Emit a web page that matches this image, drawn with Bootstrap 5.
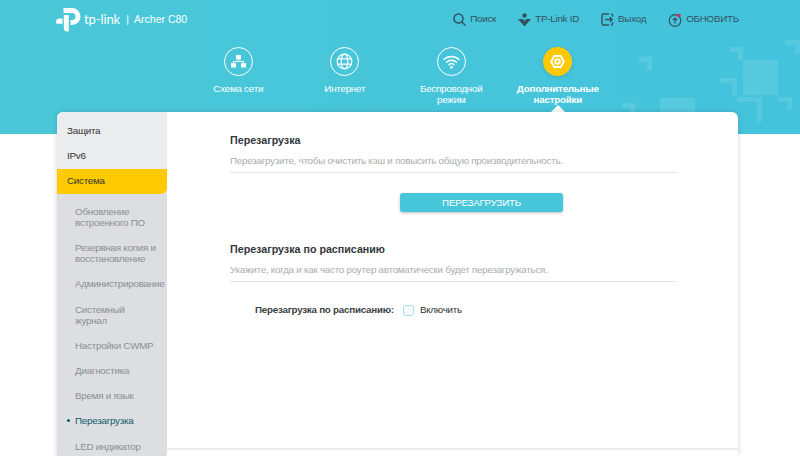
<!DOCTYPE html>
<html lang="ru">
<head>
<meta charset="utf-8">
<title>Archer C80</title>
<link href="https://cdn.jsdelivr.net/npm/bootstrap@5.3.0/dist/css/bootstrap.min.css" rel="stylesheet">
<style>
html,body{height:456px;overflow:hidden;background:#fff;}
body{font-family:"Liberation Sans",Arial,sans-serif;font-size:9.800px;letter-spacing:-.24px;color:#333;}
.hero{height:134px;background:linear-gradient(90deg,#4ac8d8,#43c3dc);position:relative;overflow:hidden;}
.decor{position:absolute;background:rgba(255,255,255,.1);}
.decor-l{position:absolute;border-top:5px solid rgba(255,255,255,.1);border-right:5px solid rgba(255,255,255,.1);}
.d1{left:639px;top:57px;width:13px;height:13px;}
.d2{left:660px;top:98px;width:35px;height:36px;}
.d3{left:622px;top:103px;width:13px;height:31px;}
.d4{left:730px;top:47px;width:13px;height:13px;}
.d5{left:743px;top:60px;width:35px;height:35px;}
.d6{left:720px;top:78px;width:17px;height:17px;}
.d7{left:737px;top:97px;width:25px;height:25px;}
.d8{left:785px;top:40px;width:15px;height:14px;}
.d9{left:778px;top:97px;width:14px;height:13px;}
.topbar{height:39px;padding:0 61px 0 56px;position:relative;}
.brand{color:#fff;gap:3px;}
.brand-word{font-family:Lato,sans-serif;font-size:13px;line-height:1;letter-spacing:-.1px;}
.brand-model{font-size:10.500px;margin-left:3px;letter-spacing:0;}
.toplink{color:#33535f;gap:4px;}
.toplinks{gap:22px;}
.mainnav{width:426px;margin-left:185px;margin-top:8px;position:relative;}
.navitem{width:106.500px;color:#fff;text-align:center;line-height:11px;}
.navcirc{width:29px;height:29px;border:1.500px solid #fff;border-radius:50%;margin:0 auto 7px;}
.navcirc.active{background:#ffc800;border:0;box-shadow:0 1px 4px rgba(0,0,0,.12);}
.navitem.on{font-weight:700;position:relative;}
.navitem.on::after{content:"";position:absolute;left:46px;top:58px;border:7px solid transparent;border-top:0;border-bottom:7px solid #fff;}
.shell{width:681px;margin:-22px 0 0 57px;background:#fff;border-radius:6px 6px 0 0;height:344px;overflow:hidden;box-shadow:0 0 5px rgba(60,70,80,.25);position:relative;}
.side{width:110px;background:#ebecee;flex:none;padding-top:7px;}
.sideitem{height:25px;flex:none;padding-left:10px;color:#333;}
.sideitem.sel{background:#ffcb00;border-radius:0 0 6px 0;}
.subnav{background:#dcdee2;padding-top:12px;flex:1;}
.subitem{padding:0 0 0 18px;color:#8b8f93;line-height:11px;margin-bottom:14.200px;position:relative;white-space:nowrap;}
.subitem.cur{color:#0e5a6b;}
.subitem.cur::before{content:"";position:absolute;left:10px;top:4px;width:3px;height:3px;background:#0e5a6b;border-radius:50%;}
.panel{flex:1;position:relative;padding:22px 61px 0 63px;}
.ttl{font-weight:700;font-size:10.700px;letter-spacing:0;color:#30363b;line-height:13px;}
.dsc{color:#a9adb0;line-height:12px;margin-top:8px;padding-bottom:5px;border-bottom:1px solid #e3e4e6;}
.rebootbtn{display:block;width:163px;height:19px;margin:20px 0 0 170px;padding:0;border:0;border-radius:3px;background:#47c6da;color:#fff;font-size:9.800px;letter-spacing:-.24px;line-height:19px;box-shadow:0 1px 3px rgba(0,0,0,.25);}
.sec2{margin-top:31px;}
.fieldrow{margin-top:21px;padding-left:25px;gap:9px;}
.fieldlbl{font-weight:700;color:#3a3f44;}
.chk{width:11px;height:11px;border:1.500px solid #9fe2ec;border-radius:2.500px;background:#f6fcfd;margin-right:-3px;}
.panelfoot{position:absolute;left:0;right:0;bottom:6px;border-top:2px solid #ebecee;}
</style>
</head>
<body>
<header class="hero">
  <div class="decor-l d1"></div><div class="decor d2"></div><div class="decor-l d3"></div>
  <div class="decor-l d4"></div><div class="decor d5"></div><div class="decor-l d6"></div>
  <div class="decor-l d7"></div><div class="decor-l d8"></div><div class="decor-l d9"></div>
  <div class="topbar d-flex align-items-center justify-content-between">
    <div class="brand d-flex align-items-center">
      <svg width="25" height="25" viewBox="0 0 25 25"><path fill="#fff" d="M7.500 1h8.500a8.500 8.500 0 0 1 0 17h-1.500v-5h1.500a3.500 3.500 0 0 0 0-7H7.500z"/><path fill="#fff" d="M7.800 8h5v16.500h-1.500a3.500 3.500 0 0 1-3.500-3.500zM0 14.800a3.500 3.500 0 0 1 3.500-3.300h3v5.300H.5z"/></svg>
      <span class="brand-word">tp-link</span>
      <span class="brand-model">|&nbsp; Archer C80</span>
    </div>
    <nav class="toplinks d-flex align-items-center">
      <span class="toplink d-flex align-items-center"><svg width="13" height="13" viewBox="0 0 13 13" fill="none" stroke="#33535f" stroke-width="1.500"><circle cx="5.500" cy="5.500" r="4.500"/><path d="M9 9l3.500 3.500"/></svg>Поиск</span>
      <span class="toplink d-flex align-items-center"><svg width="13" height="14" viewBox="0 0 13 14" fill="#33535f"><circle cx="6.500" cy="2.500" r="2.200"/><path d="M0 6h4.500l2 1.800L8.500 6H13l-6.500 7.500z"/></svg>TP-Link ID</span>
      <span class="toplink d-flex align-items-center"><svg width="13" height="13" viewBox="0 0 13 13" fill="none" stroke="#33535f" stroke-width="1.400"><path d="M8 1H2.200A1.300 1.300 0 0 0 1 2.200v8.600A1.300 1.300 0 0 0 2.200 12H8M11.500 3.800v-1.600A1.300 1.300 0 0 0 10 1M11.500 9.200v1.600A1.300 1.300 0 0 1 10 12M4 6.500h7M8.800 4.200l2.400 2.300-2.400 2.300"/></svg>Выход</span>
      <span class="toplink d-flex align-items-center"><svg width="14" height="14" viewBox="0 0 14 14" fill="none" stroke="#33535f" stroke-width="1.200"><circle cx="7" cy="7.500" r="5.800"/><path d="M7 10.500V5M4.800 7.200 7 5l2.200 2.200"/><circle cx="11" cy="2.500" r="1.800" fill="#e0245e" stroke="none"/></svg>ОБНОВИТЬ</span>
    </nav>
  </div>
  <nav class="mainnav d-flex">
    <div class="navitem"><div class="navcirc d-flex align-items-center justify-content-center"><svg width="15" height="13" viewBox="0 0 15 13" fill="#fff"><rect x="5" y="0" width="5" height="4.500" rx=".6"/><rect x="0" y="8" width="5" height="4.500" rx=".6"/><rect x="10" y="8" width="5" height="4.500" rx=".6"/><path d="M7 4.500h1V6h5v2h-1V7H3v1H2V6h5z"/></svg></div>Схема сети</div>
    <div class="navitem"><div class="navcirc d-flex align-items-center justify-content-center"><svg width="17" height="17" viewBox="0 0 17 17" fill="none" stroke="#fff" stroke-width="1.200"><circle cx="8.500" cy="8.500" r="7.300"/><ellipse cx="8.500" cy="8.500" rx="3.300" ry="7.300"/><path d="M2 5.800h13M2 11.200h13"/></svg></div>Интернет</div>
    <div class="navitem"><div class="navcirc d-flex align-items-center justify-content-center"><svg width="17" height="14" viewBox="0 0 17 14" fill="none" stroke="#fff" stroke-width="1.400" stroke-linecap="round"><path d="M1 4.500a10.800 10.800 0 0 1 15 0M3.500 7.200a7.200 7.200 0 0 1 10 0M6 9.800a3.600 3.600 0 0 1 5 0"/><circle cx="8.500" cy="12.400" r=".7" fill="#fff"/></svg></div>Беспроводной<br>режим</div>
    <div class="navitem on"><div class="navcirc active d-flex align-items-center justify-content-center"><svg width="15" height="15" viewBox="0 0 15 15" fill="none" stroke="#fff" stroke-width="2"><path d="M4.300 1.900h6.400l3.200 5.600-3.200 5.600H4.300L1.100 7.500z"/><circle cx="7.500" cy="7.500" r="2.300"/></svg></div>Дополнительные<br>настройки</div>
  </nav>
</header>
<main class="shell d-flex">
  <aside class="side d-flex flex-column">
    <div class="sideitem d-flex align-items-center">Защита</div>
    <div class="sideitem d-flex align-items-center">IPv6</div>
    <div class="sideitem sel d-flex align-items-center">Система</div>
    <div class="subnav">
      <div class="subitem">Обновление<br>встроенного ПО</div>
      <div class="subitem">Резервная копия и<br>восстановление</div>
      <div class="subitem">Администрирование</div>
      <div class="subitem">Системный<br>журнал</div>
      <div class="subitem">Настройки CWMP</div>
      <div class="subitem">Диагностика</div>
      <div class="subitem">Время и язык</div>
      <div class="subitem cur">Перезагрузка</div>
      <div class="subitem">LED индикатор</div>
    </div>
  </aside>
  <section class="panel">
    <div class="ttl">Перезагрузка</div>
    <div class="dsc">Перезагрузите, чтобы очистить кэш и повысить общую производительность.</div>
    <button type="button" class="rebootbtn">ПЕРЕЗАГРУЗИТЬ</button>
    <div class="sec2">
      <div class="ttl">Перезагрузка по расписанию</div>
      <div class="dsc">Укажите, когда и как часто роутер автоматически будет перезагружаться.</div>
    </div>
    <div class="fieldrow d-flex align-items-center">
      <span class="fieldlbl">Перезагрузка по расписанию:</span>
      <span class="chk"></span>
      <span>Включить</span>
    </div>
    <div class="panelfoot"></div>
  </section>
</main>
</body>
</html>
